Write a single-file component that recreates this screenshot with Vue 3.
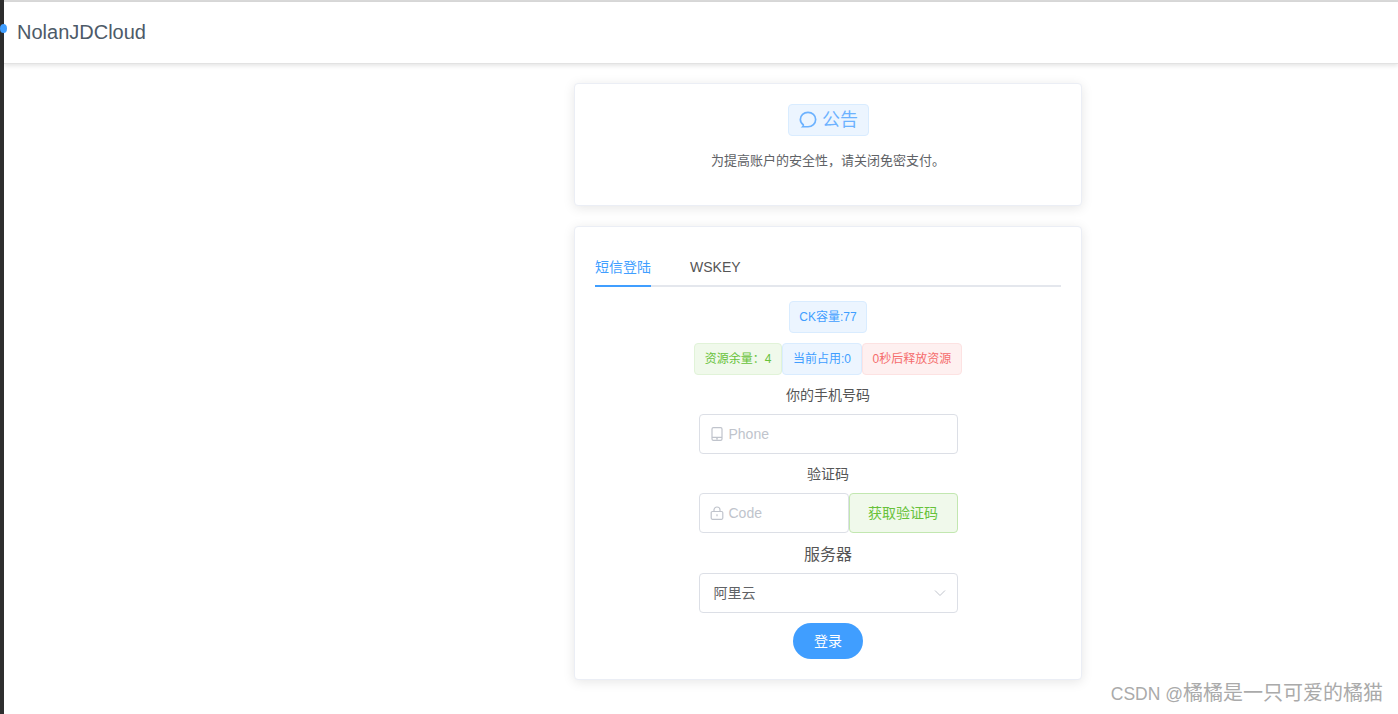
<script setup>
const statusTags = [
  { text: '资源余量：4', type: 'success' },
  { text: '当前占用:0', type: 'primary' },
  { text: '0秒后释放资源', type: 'danger' },
]
</script>

<template>
  <div class="page">
    <aside class="strip"></aside>
    <div class="main">
      <header class="topbar">
        <span class="dot"></span>
        <span class="brand">NolanJDCloud</span>
      </header>
      <div class="content">
        <section class="card notice">
          <span class="tag tag-primary tag-large">
            <svg class="chat" viewBox="0 0 16 16" fill="none" stroke="currentColor" stroke-width="1.500">
              <path d="M8 1.200c3.800 0 6.800 2.800 6.800 6.300s-3 6.500-6.800 6.500H3.300c.5-.5.700-1.100.5-1.800C2.200 11 1.200 9.300 1.200 7.500 1.200 4 4.200 1.200 8 1.200z" />
            </svg>
            <span class="tag-large-text">公告</span>
          </span>
          <p class="notice-text">为提高账户的安全性，请关闭免密支付。</p>
        </section>

        <section class="card login">
          <nav class="tabs">
            <span class="tab active">短信登陆</span>
            <span class="tab">WSKEY</span>
          </nav>
          <div class="tag-row first">
            <span class="tag tag-primary">CK容量:77</span>
          </div>
          <div class="tag-row second">
            <span v-for="t in statusTags" :key="t.text" class="tag" :class="'tag-' + t.type">{{ t.text }}</span>
          </div>

          <div class="label l1">你的手机号码</div>
          <div class="field">
            <svg class="icon" viewBox="0 0 14 14" fill="none" stroke="currentColor" stroke-width="1.200">
              <rect x="2" y="0.700" width="10" height="12.600" rx="1.400" />
              <path d="M2 10.300h10M6 11.800h2" />
            </svg>
            <span class="placeholder">Phone</span>
          </div>

          <div class="label l2">验证码</div>
          <div class="code-row">
            <div class="field code">
              <svg class="icon" viewBox="0 0 14 14" fill="none" stroke="currentColor" stroke-width="1.200">
                <rect x="1.200" y="5.500" width="11.600" height="7.800" rx="1.200" />
                <path d="M4 5.500V4a3 3 0 0 1 6 0v1.500M7 8.300v2" />
              </svg>
              <span class="placeholder">Code</span>
            </div>
            <button class="send">获取验证码</button>
          </div>

          <div class="label l3">服务器</div>
          <div class="field select">
            <span class="value">阿里云</span>
            <svg class="arrow" viewBox="0 0 12 8" fill="none" stroke="currentColor" stroke-width="1">
              <path d="M1 1.500l5 5 5-5" />
            </svg>
          </div>

          <div class="submit-row">
            <button class="submit">登录</button>
          </div>
        </section>
      </div>
    </div>
    <span class="watermark">CSDN @<span class="watermark-cjk">橘橘是一只可爱的橘猫</span></span>
  </div>
</template>

<style>
html, body { margin: 0; background: #fff; }
</style>

<style scoped>
.page {
  position: relative;
  display: flex;
  width: 1398px;
  height: 714px;
  overflow: hidden;
  background: #fff;
  color: #606266;
  font-family: "Liberation Sans", "Noto Sans CJK SC", sans-serif;
}
.strip { flex: 0 0 4px; background: #2e2e2e; }
.main { flex: 1; min-width: 0; display: flex; flex-direction: column; border-top: 2px solid #d9d9d9; }
.topbar {
  position: relative;
  height: 62px;
  flex: none;
  display: flex;
  align-items: center;
  padding-left: 13px;
  box-sizing: border-box;
  border-bottom: 1px solid #e2e2e2;
  box-shadow: 0 2px 4px rgba(0, 0, 0, .1);
}
.dot {
  position: absolute;
  left: -4px;
  top: 22px;
  width: 7px;
  height: 9px;
  border-radius: 50%;
  background: #409eff;
}
.brand { font-size: 20px; color: #4d5a68; }
.content { padding: 19px 0 0 570px; }
.card {
  width: 508px;
  box-sizing: border-box;
  background: #fff;
  border: 1px solid #ebeef5;
  border-radius: 4px;
  box-shadow: 0 2px 12px rgba(0, 0, 0, .1);
  padding: 20px;
  text-align: center;
}
.notice { height: 123px; margin-bottom: 20px; }
.tag {
  display: inline-flex;
  align-items: center;
  justify-content: center;
  height: 32px;
  box-sizing: border-box;
  padding: 0 9.750px 4px;
  font-size: 12px;
  border: 1px solid;
  border-radius: 4px;
}
.tag-primary { background: #ecf5ff; border-color: #d9ecff; color: #409eff; }
.tag-success { background: #f0f9eb; border-color: #e1f3d8; color: #67c23a; }
.tag-danger { background: #fef0f0; border-color: #fde2e2; color: #f56c6c; }
.tag-large { font-size: 18px; gap: 5px; padding: 0 9.500px 0 10.500px; }
.tag-large { color: #6cb2ff; }
.tag-large-text { margin-top: -5px; }
.chat { width: 18px; height: 18px; }
.notice-text { margin: 16px 0 0; font-size: 13px; line-height: 18px; color: #606266; }
.tabs {
  display: flex;
  height: 38px;
  border-bottom: 2px solid #e4e7ed;
}
.tab { height: 38px; line-height: 41px; font-size: 14px; color: #555; margin-right: 39px; box-sizing: content-box; }
.tab.active { color: #409eff; border-bottom: 2px solid #409eff; }
.tag-row { display: flex; justify-content: center; }
.tag-row.first { margin-top: 14px; }
.tag-row.second { margin-top: 10px; }
.label { font-size: 14px; line-height: 20px; color: #555; }
.l1 { margin-top: 10px; }
.l2 { margin-top: 10px; }
.l3 { margin-top: 12px; font-size: 16px; line-height: 20px; }
.field {
  width: 259px;
  height: 40px;
  margin: 9px auto 0;
  box-sizing: border-box;
  display: flex;
  align-items: center;
  padding-left: 10px;
  background: #fff;
  border: 1px solid #dcdfe6;
  border-radius: 4px;
  font-size: 14px;
  text-align: left;
}
.icon { width: 14px; height: 14px; color: #c0c4cc; flex: none; }
.placeholder { margin-left: 5px; color: #c0c4cc; }
.code-row { width: 259px; margin: 9px auto 0; display: flex; }
.field.code { width: 150px; margin: 0; }
.send {
  flex: 1;
  height: 40px;
  padding: 0 0 2px;
  font: inherit;
  font-size: 14px;
  color: #67c23a;
  background: #f0f9eb;
  border: 1px solid #c2e7b0;
  border-radius: 4px;
}
.select { justify-content: space-between; padding: 0 11px 0 14px; margin-top: 8px; }
.value { color: #606266; padding-bottom: 2px; }
.arrow { width: 12px; height: 8px; color: #c0c4cc; }
.submit-row { margin-top: 10px; display: flex; justify-content: center; }
.submit {
  width: 70px;
  height: 36px;
  padding: 0 0 2px;
  font: inherit;
  font-size: 14px;
  color: #fff;
  background: #409eff;
  border: 0;
  border-radius: 20px;
}
.watermark {
  position: absolute;
  right: 15px;
  bottom: 8px;
  font-size: 17.500px;
  line-height: 24px;
  color: #aaa;
}
.watermark-cjk { font-size: 20px; }
</style>
